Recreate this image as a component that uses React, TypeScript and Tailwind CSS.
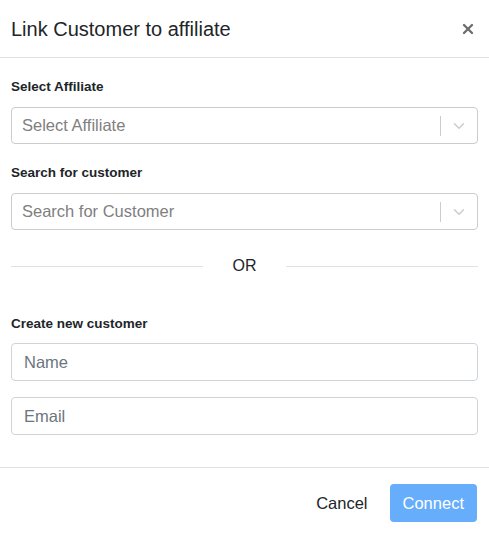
import { ChevronDown, X } from "lucide-react";

function SelectBox({ placeholder }: { placeholder: string }) {
  return (
    <div className="flex h-[37px] items-center rounded-[4px] border border-[#cccccc] bg-white">
      <span className="flex-1 pl-[10px] text-[16.5px] text-[#808080]">{placeholder}</span>
      <span className="h-[20px] w-px bg-[#cccccc]" />
      <span className="flex w-[36px] items-center justify-center text-[#cccccc]">
        <ChevronDown size={18} strokeWidth={2} />
      </span>
    </div>
  );
}

function TextInput({ placeholder }: { placeholder: string }) {
  return (
    <input
      placeholder={placeholder}
      className="h-[38px] w-full rounded-[4px] border border-[#ced4da] bg-white px-3 text-[16.5px] text-[#495057] outline-none placeholder:text-[#6c757d]"
    />
  );
}

export default function App() {
  return (
    <div className="w-[489px] bg-white font-['Liberation_Sans',Arial,sans-serif] text-[#212529]">
      <div className="flex h-[58px] items-center justify-between border-b border-[#dee2e6] px-[11px]">
        <h2 className="text-[20px] font-medium leading-none">Link Customer to affiliate</h2>
        <X size={16} strokeWidth={3.5} className="mr-[2px] text-[#6d6d6d]" />
      </div>
      <div className="px-[11px] pt-[20px] pb-[32px]">
        <div className="mb-[11px] text-[13.5px] font-bold leading-[18px]">Select Affiliate</div>
        <SelectBox placeholder="Select Affiliate" />
        <div className="mt-[20px] mb-[11px] text-[13.5px] font-bold leading-[18px]">Search for customer</div>
        <SelectBox placeholder="Search for Customer" />
        <div className="mt-[24px] flex items-center">
          <div className="h-px w-[192px] bg-[#e2e2e2]" />
          <div className="flex-1 text-center text-[16px] leading-6">OR</div>
          <div className="h-px w-[192px] bg-[#e2e2e2]" />
        </div>
        <div className="mt-[37px] mb-[10px] text-[13.5px] font-bold leading-[18px]">Create new customer</div>
        <TextInput placeholder="Name" />
        <div className="mt-[16px]">
          <TextInput placeholder="Email" />
        </div>
      </div>
      <div className="flex items-center justify-end gap-[22px] border-t border-[#dee2e6] px-[12px] pt-[16px] pb-[12px]">
        <span className="text-[16.5px]">Cancel</span>
        <button className="h-[38px] rounded-[4px] bg-[#66adfb] px-[13px] text-[16.5px] text-white">Connect</button>
      </div>
    </div>
  );
}
